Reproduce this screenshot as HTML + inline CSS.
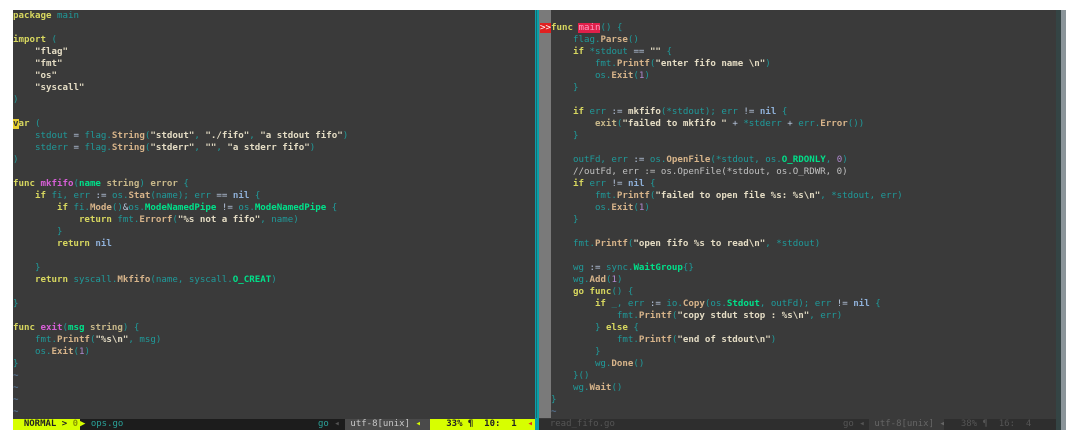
<!DOCTYPE html>
<html><head><meta charset="utf-8"><style>
*{margin:0;padding:0;box-sizing:border-box}
body{width:1080px;height:439px;background:#fff;position:relative;overflow:hidden;font-family:"DejaVu Sans Mono","Liberation Mono",monospace;font-size:9.15px}
.pane{position:absolute;top:9.5px;height:420px;background:#3a3a3a}
pre{position:absolute;top:9.5px;font-family:inherit;font-size:9.15px;line-height:12px;color:#2aa198;white-space:pre}
.k{color:#d7d75f;font-weight:bold}
.s{color:#e4dcc4;font-weight:bold}
.t{color:#1f9a9a}
.f{color:#d75fd7;font-weight:bold}
.m{color:#d7b48a;font-weight:bold}
.g{color:#00e08a;font-weight:bold}
.n{color:#8fb0d8;font-weight:bold}
.p{color:#b08ad0}
.o{color:#b8c8e0}
.c{color:#c0c0c0}
.ty{color:#c8b88a;font-weight:bold}
.tl{color:#5f87af}
.st{position:absolute;top:419px;height:11px;line-height:11px;font-size:9px;white-space:pre}
</style></head><body>
<div class="pane" style="left:13px;width:522px"></div>
<div style="position:absolute;left:535px;top:9.5px;width:4px;height:420px;background:#0aa0a8"></div>
<div style="position:absolute;left:536px;top:9.5px;width:1px;height:408px;background:#1a6c72"></div>
<div class="pane" style="left:539px;width:517px"></div>
<div style="position:absolute;left:539px;top:9.5px;width:12px;height:408px;background:#7a7a7a"></div>
<div style="position:absolute;left:1056px;top:9.5px;width:5px;height:420px;background:#344444"></div>
<div style="position:absolute;left:1061px;top:9.5px;width:5px;height:420px;background:#8a9499"></div>
<pre style="left:13px"><span class="k">package</span> <span class="t">main</span>

<span class="k">import</span> <span class="t">(</span>
    <span class="s">"flag"</span>
    <span class="s">"fmt"</span>
    <span class="s">"os"</span>
    <span class="s">"syscall"</span>
<span class="t">)</span>

<span class="k"><span style="background:#e8d030;color:#333">v</span>ar</span> <span class="t">(</span>
    <span class="t">stdout</span> <span class="o">=</span> <span class="t">flag.</span><span class="m">String</span><span class="t">(</span><span class="s">"stdout"</span><span class="t">,</span> <span class="s">"./fifo"</span><span class="t">,</span> <span class="s">"a stdout fifo"</span><span class="t">)</span>
    <span class="t">stderr</span> <span class="o">=</span> <span class="t">flag.</span><span class="m">String</span><span class="t">(</span><span class="s">"stderr"</span><span class="t">,</span> <span class="s">""</span><span class="t">,</span> <span class="s">"a stderr fifo"</span><span class="t">)</span>
<span class="t">)</span>

<span class="k">func</span> <span class="f">mkfifo</span><span class="t">(</span><span class="g">name</span> <span class="ty">string</span><span class="t">)</span> <span class="ty">error</span> <span class="t">{</span>
    <span class="k">if</span> <span class="t">fi, err</span> <span class="o">:=</span> <span class="t">os.</span><span class="m">Stat</span><span class="t">(name); err</span> <span class="o">==</span> <span class="n">nil</span> <span class="t">{</span>
        <span class="k">if</span> <span class="t">fi.</span><span class="m">Mode</span><span class="t">()</span><span class="o">&amp;</span><span class="t">os.</span><span class="g">ModeNamedPipe</span> <span class="o">!=</span> <span class="t">os.</span><span class="g">ModeNamedPipe</span> <span class="t">{</span>
            <span class="k">return</span> <span class="t">fmt.</span><span class="m">Errorf</span><span class="t">(</span><span class="s">"%s not a fifo"</span><span class="t">, name)</span>
        <span class="t">}</span>
        <span class="k">return</span> <span class="n">nil</span>

    <span class="t">}</span>
    <span class="k">return</span> <span class="t">syscall.</span><span class="m">Mkfifo</span><span class="t">(name, syscall.</span><span class="g">O_CREAT</span><span class="t">)</span>

<span class="t">}</span>

<span class="k">func</span> <span class="f">exit</span><span class="t">(</span><span class="g">msg</span> <span class="ty">string</span><span class="t">)</span> <span class="t">{</span>
    <span class="t">fmt.</span><span class="m">Printf</span><span class="t">(</span><span class="s">"%s\n"</span><span class="t">, msg)</span>
    <span class="t">os.</span><span class="m">Exit</span><span class="t">(</span><span class="p">1</span><span class="t">)</span>
<span class="t">}</span>
<span class="tl">~</span>
<span class="tl">~</span>
<span class="tl">~</span>
<span class="tl">~</span></pre>
<pre style="left:540px"> 
<span style="background:#e02020;color:#fff">&gt;&gt;</span><span class="k">func</span> <span style="background:#e0204a;color:#ff9ac0">main</span><span class="t">() {</span>
      <span class="t">flag.</span><span class="m">Parse</span><span class="t">()</span>
      <span class="k">if</span> <span class="t">*stdout</span> <span class="o">==</span> <span class="s">""</span> <span class="t">{</span>
          <span class="t">fmt.</span><span class="m">Printf</span><span class="t">(</span><span class="s">"enter fifo name \n"</span><span class="t">)</span>
          <span class="t">os.</span><span class="m">Exit</span><span class="t">(</span><span class="p">1</span><span class="t">)</span>
      <span class="t">}</span>

      <span class="k">if</span> <span class="t">err</span> <span class="o">:=</span> <span class="s">mkfifo</span><span class="t">(*stdout); err</span> <span class="o">!=</span> <span class="n">nil</span> <span class="t">{</span>
          <span class="ty">exit</span><span class="t">(</span><span class="s">"failed to mkfifo "</span> <span class="o">+</span> <span class="t">*stderr</span> <span class="o">+</span> <span class="t">err.</span><span class="m">Error</span><span class="t">())</span>
      <span class="t">}</span>

      <span class="t">outFd, err</span> <span class="o">:=</span> <span class="t">os.</span><span class="m">OpenFile</span><span class="t">(*stdout, os.</span><span class="g">O_RDONLY</span><span class="t">,</span> <span class="p">0</span><span class="t">)</span>
      <span class="c">//outFd, err := os.OpenFile(*stdout, os.O_RDWR, 0)</span>
      <span class="k">if</span> <span class="t">err</span> <span class="o">!=</span> <span class="n">nil</span> <span class="t">{</span>
          <span class="t">fmt.</span><span class="m">Printf</span><span class="t">(</span><span class="s">"failed to open file %s: %s\n"</span><span class="t">, *stdout, err)</span>
          <span class="t">os.</span><span class="m">Exit</span><span class="t">(</span><span class="p">1</span><span class="t">)</span>
      <span class="t">}</span>

      <span class="t">fmt.</span><span class="m">Printf</span><span class="t">(</span><span class="s">"open fifo %s to read\n"</span><span class="t">, *stdout)</span>

      <span class="t">wg</span> <span class="o">:=</span> <span class="t">sync.</span><span class="g">WaitGroup</span><span class="t">{}</span>
      <span class="t">wg.</span><span class="m">Add</span><span class="t">(</span><span class="p">1</span><span class="t">)</span>
      <span class="k">go func</span><span class="t">() {</span>
          <span class="k">if</span> <span class="t">_, err</span> <span class="o">:=</span> <span class="t">io.</span><span class="m">Copy</span><span class="t">(os.</span><span class="g">Stdout</span><span class="t">, outFd); err</span> <span class="o">!=</span> <span class="n">nil</span> <span class="t">{</span>
              <span class="t">fmt.</span><span class="m">Printf</span><span class="t">(</span><span class="s">"copy stdut stop : %s\n"</span><span class="t">, err)</span>
          <span class="t">}</span> <span class="k">else</span> <span class="t">{</span>
              <span class="t">fmt.</span><span class="m">Printf</span><span class="t">(</span><span class="s">"end of stdout\n"</span><span class="t">)</span>
          <span class="t">}</span>
          <span class="t">wg.</span><span class="m">Done</span><span class="t">()</span>
      <span class="t">}()</span>
      <span class="t">wg.</span><span class="m">Wait</span><span class="t">()</span>
  <span class="t">}</span>
  <span class="tl">~</span></pre>
<!-- left status -->
<div class="st" style="left:13px;width:67px;background:#d7ff00;color:#222;font-weight:bold">  NORMAL &gt; <span style="color:#8a9a00">0</span></div>
<div class="st" style="left:80px;width:265px;background:#1c1c1c;color:#2aa198"><span style="color:#d7ff00">▶</span> ops.go</div>
<div class="st" style="left:318px;color:#2aa198">go <span style="color:#555">◂</span></div>
<div class="st" style="left:345px;width:85px;background:#4a4a4a;color:#c8c8c8"> utf-8[unix] <span style="color:#d7ff00">◂</span></div>
<div class="st" style="left:430px;width:105px;background:#d7ff00;color:#222;font-weight:bold">   33% ¶  10:  1  <span style="color:#e03020">◂</span></div>
<!-- right status -->
<div class="st" style="left:539px;width:517px;background:#2e2e2e;color:#555">  read_fifo.go</div>
<div class="st" style="left:843px;color:#555">go ◂</div>
<div class="st" style="left:869px;width:75px;background:#3a3a3a;color:#666"> utf-8[unix] ◂</div>
<div class="st" style="left:950px;color:#555">  38% ¶  16:  4</div>
</body></html>
